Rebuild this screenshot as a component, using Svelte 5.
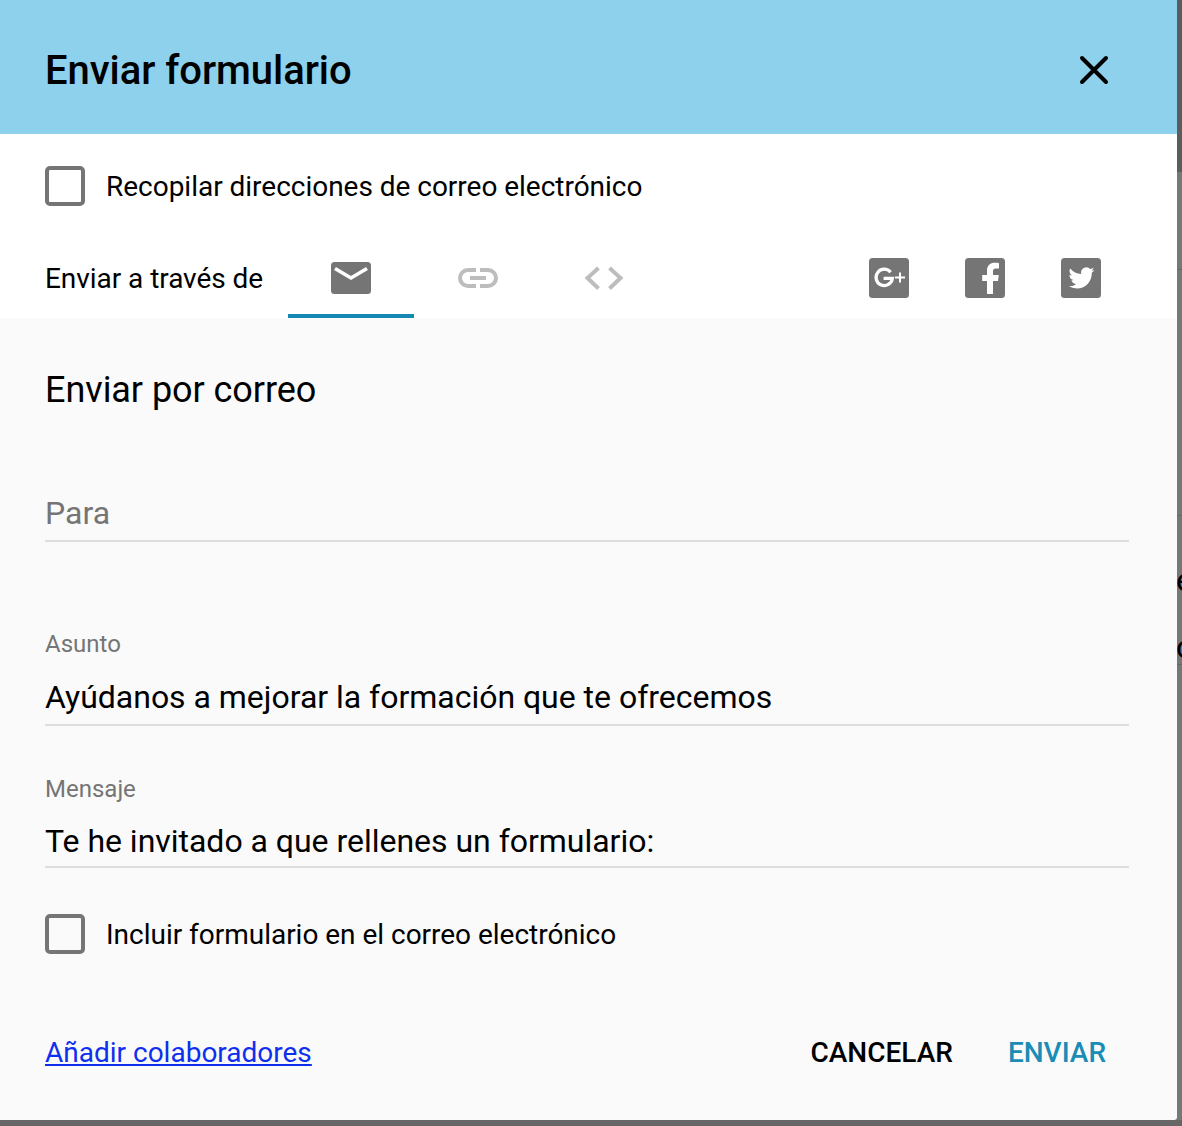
<script>
  const social = ['gplus', 'facebook', 'twitter'];
</script>

<div class="page">
  <span class="behind e">e</span>
  <span class="behind c">c</span>
  <span class="behind-line l1"></span>
  <span class="behind-line l2"></span>
  <span class="behind-line l3"></span>
  <div class="dialog">
    <header class="head">
      <h1>Enviar formulario</h1>
      <svg class="close" width="40" height="40" viewBox="0 0 40 40" aria-label="Cerrar">
        <path d="M8 8 L32 32 M32 8 L8 32" stroke="#000" stroke-width="4" stroke-linecap="round" fill="none" />
      </svg>
    </header>

    <div class="top">
      <label class="check first">
        <span class="box"></span>
        <span>Recopilar direcciones de correo electrónico</span>
      </label>
      <div class="tabs">
        <span class="via">Enviar a través de</span>
        <div class="tab active">
          <svg width="40" height="40" viewBox="0 0 40 40">
            <rect x="0" y="4" width="40" height="32" rx="3.5" fill="#757575" />
            <path d="M4 10.5 L20 20 L36 10.5" stroke="#fff" stroke-width="3.6" fill="none" />
          </svg>
        </div>
        <div class="tab shifted">
          <svg width="40" height="40" viewBox="0 0 40 40" fill="none" stroke="#bdbdbd" stroke-width="4">
            <path d="M18 12 H10 a8 8 0 0 0 0 16 H18" />
            <path d="M22 12 H30 a8 8 0 0 1 0 16 H22" />
            <path d="M12 20 H28" />
          </svg>
        </div>
        <div class="tab shifted">
          <svg width="40" height="40" viewBox="0 0 40 40" fill="none" stroke="#bdbdbd" stroke-width="4">
            <path d="M14.5 10 L3.5 20 L14.5 30.5" />
            <path d="M25.5 10 L36.5 20 L25.5 30.5" />
          </svg>
        </div>
        <div class="social">
          {#each social as name}
            <svg width="40" height="40" viewBox="0 0 40 40">
              <rect width="40" height="40" rx="3.5" fill="#757575" />
              {#if name === 'gplus'}
                <path d="M21.6 14.2 A8.2 8.2 0 1 0 23.4 20.4 H14.6" fill="none" stroke="#fff" stroke-width="3.2" />
                <path d="M31 14.4 V24.4 M26 19.4 H36" fill="none" stroke="#fff" stroke-width="2" />
              {:else if name === 'facebook'}
                <path fill="#fff" d="M28 36 V23 h5 l.8 -6 H28 v-3.5 c0 -1.8 .6 -3 3 -3 h3 V5 c-.6 -.1 -2.4 -.2 -4.3 -.2 c-4.3 0 -7.7 2.6 -7.7 7.6 V17 h-4.8 v6 H22 v13 z" />
              {:else}
                <g transform="translate(7.5 7) scale(1.08)">
                  <path fill="#fff" d="M23.953 4.57a10 10 0 01-2.825.775 4.958 4.958 0 002.163-2.723c-.951.555-2.005.959-3.127 1.184a4.92 4.92 0 00-8.384 4.482C7.69 8.095 4.067 6.13 1.64 3.162a4.822 4.822 0 00-.666 2.475c0 1.71.87 3.213 2.188 4.096a4.904 4.904 0 01-2.228-.616v.06a4.923 4.923 0 003.946 4.827 4.996 4.996 0 01-2.212.085 4.936 4.936 0 004.604 3.417 9.867 9.867 0 01-6.102 2.105c-.39 0-.779-.023-1.17-.067a13.995 13.995 0 007.557 2.209c9.053 0 13.998-7.496 13.998-13.985 0-.21 0-.42-.015-.63A9.935 9.935 0 0024 4.59z" />
                </g>
              {/if}
            </svg>
          {/each}
        </div>
      </div>
    </div>

    <section class="body">
      <h2>Enviar por correo</h2>
      <div class="field para"><span class="placeholder">Para</span></div>
      <div class="field asunto">
        <span class="small">Asunto</span>
        <span class="value">Ayúdanos a mejorar la formación que te ofrecemos</span>
      </div>
      <div class="field mensaje">
        <span class="small">Mensaje</span>
        <span class="value">Te he invitado a que rellenes un formulario:</span>
      </div>
      <label class="check second">
        <span class="box"></span>
        <span>Incluir formulario en el correo electrónico</span>
      </label>
      <footer class="foot">
        <a href="#add" class="link">Añadir colaboradores</a>
        <div class="actions">
          <span class="btn">CANCELAR</span>
          <span class="btn send">ENVIAR</span>
        </div>
      </footer>
    </section>
  </div>
</div>

<style>
  :global(body) {
    margin: 0;
  }
  .page {
    position: relative;
    width: 1182px;
    height: 1126px;
    overflow: hidden;
    background: linear-gradient(to bottom, #5c5c5c 0, #5c5c5c 172px, #777 172px, #777 1120px, #666 1120px);
    font-family: Roboto, "Noto Sans", sans-serif;
    color: #000;
  }
  .behind {
    position: absolute;
    left: 1176px;
    font-size: 32px;
    line-height: 32px;
    color: #000;
  }
  .e { top: 564px; }
  .c { top: 631px; }
  .behind-line {
    position: absolute;
    left: 1177px;
    width: 5px;
    height: 1px;
    background: #666;
  }
  .l1 { top: 269px; }
  .l2 { top: 515px; }
  .l3 { top: 664px; }
  .dialog {
    width: 1177px;
    height: 1120px;
    display: flex;
    flex-direction: column;
    background: #fafafa;
    border-bottom-right-radius: 3px;
    overflow: hidden;
    position: relative;
  }
  .head {
    height: 134px;
    box-sizing: border-box;
    flex: none;
    background: #8ed1ec;
    display: flex;
    align-items: center;
    justify-content: space-between;
    padding: 6px 63px 0 46px;
  }
  h1 {
    margin: 2px 0 0 -1px;
    font-size: 40px;
    font-weight: 500;
    line-height: 44px;
    letter-spacing: -0.05px;
  }
  .top {
    background: #fff;
    height: 184px;
    flex: none;
    padding-left: 45px;
    display: flex;
    flex-direction: column;
  }
  .check {
    display: flex;
    align-items: center;
    gap: 21px;
    font-size: 28px;
    line-height: 40px;
    letter-spacing: -0.02px;
  }
  .check.first {
    margin-top: 32px;
    height: 40px;
    align-items: flex-start;
  }
  .check.first span + span {
    padding-top: 1px;
  }
  .box {
    width: 40px;
    height: 40px;
    box-sizing: border-box;
    border: 4px solid #757575;
    border-radius: 5px;
    flex: none;
  }
  .check.second .box {
    margin: -1px 0 1px;
  }
  .tabs {
    margin-top: 32px;
    height: 80px;
    display: flex;
    align-items: stretch;
  }
  .via {
    width: 243px;
    box-sizing: border-box;
    font-size: 28px;
    line-height: 82px;
    height: 80px;
    letter-spacing: -0.05px;
    flex: none;
  }
  .tab {
    width: 126px;
    box-sizing: border-box;
    display: flex;
    align-items: flex-start;
    justify-content: center;
    padding-top: 20px;
  }
  .tab.shifted {
    padding-left: 2px;
  }
  .tab.active {
    border-bottom: 4px solid #1589b3;
  }
  .social {
    display: flex;
    gap: 56px;
    margin-left: 203px;
    padding-top: 20px;
    align-items: flex-start;
  }
  .body {
    flex: 1;
    padding: 0 48px 0 45px;
    display: flex;
    flex-direction: column;
  }
  h2 {
    margin: 47px 0 0 0;
    font-size: 36px;
    font-weight: 400;
    line-height: 50px;
    letter-spacing: -0.05px;
  }
  .field {
    display: flex;
    flex-direction: column;
    border-bottom: 2px solid #dedede;
  }
  .para {
    margin-top: 84px;
    height: 41px;
  }
  .placeholder {
    font-size: 32px;
    line-height: 40px;
    color: #757575;
    margin-top: -6px;
  }
  .asunto {
    margin-top: 88px;
  }
  .mensaje {
    margin-top: 49px;
  }
  .small {
    font-size: 24px;
    line-height: 28px;
    color: #757575;
  }
  .value {
    font-size: 32px;
    line-height: 40px;
    margin-top: 19px;
    padding-bottom: 7px;
    letter-spacing: -0.02px;
  }
  .mensaje .value {
    margin-top: 18px;
    padding-bottom: 5px;
  }
  .check.second {
    margin-top: 47px;
  }
  .foot {
    margin-top: 68px;
    display: flex;
    align-items: center;
    justify-content: space-between;
    line-height: 60px;
    font-size: 28px;
  }
  .link {
    color: #0f2fee;
    text-decoration: underline;
  }
  .actions {
    display: flex;
    gap: 55px;
    padding-right: 23px;
  }
  .btn {
    font-weight: 500;
  }
  .send {
    color: #1a8cb5;
  }
</style>
